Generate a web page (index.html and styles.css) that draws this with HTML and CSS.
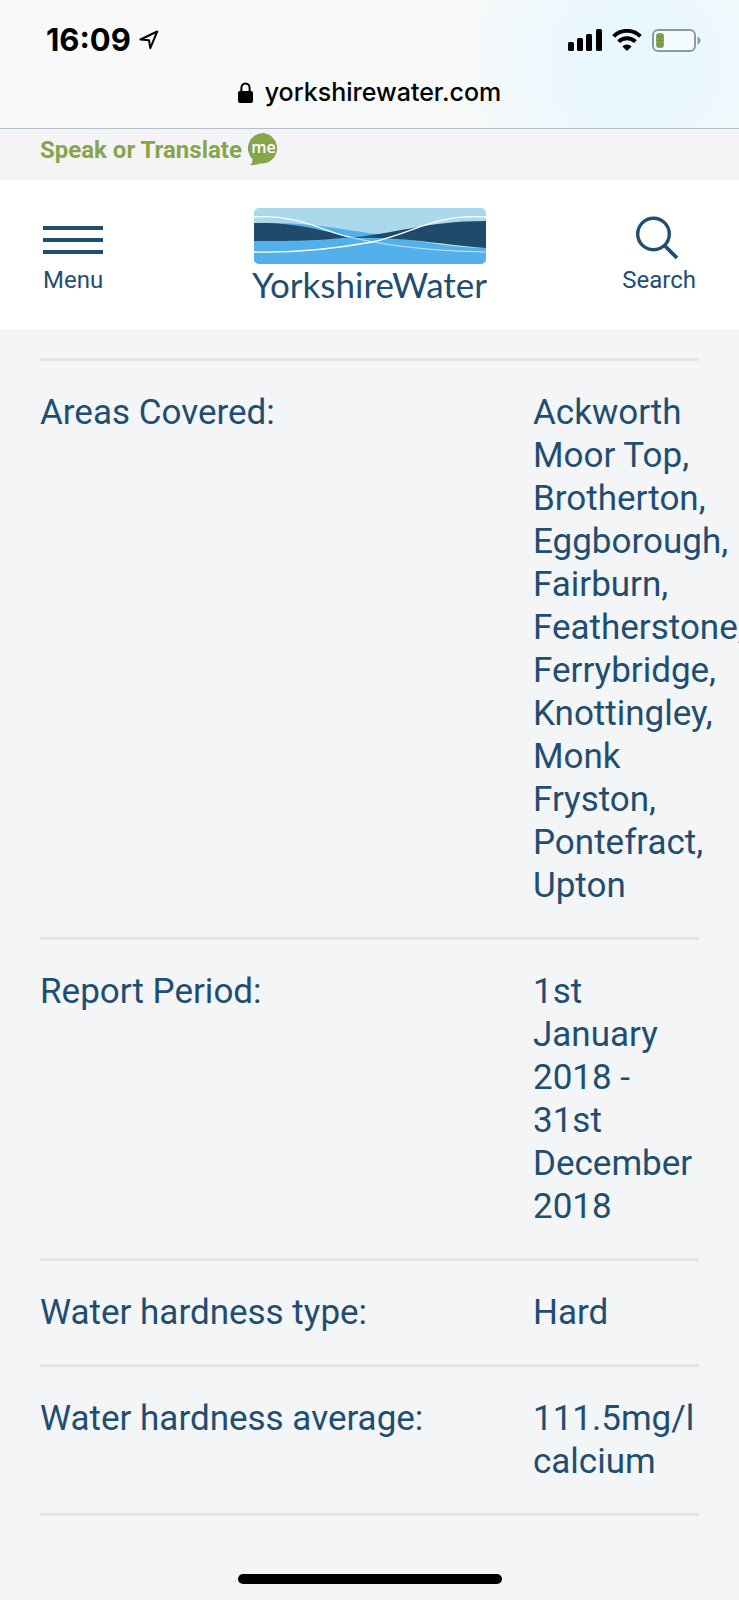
FILE: index.html
```html
<!DOCTYPE html>
<html lang="en">
<head>
    <meta charset="UTF-8">
    <meta name="viewport" content="width=device-width, initial-scale=1.0">
    <title>Yorkshire Water</title>
    <link rel="stylesheet" href="styles.css">
</head>
<body>
    <div class="browser-bar">
        <div class="status">
            <div class="status-time">
                <time>16:09</time>
                <svg width="20" height="20" viewBox="0 0 20 20" aria-hidden="true">
                    <path d="M1.5 9.5 L18.2 1.5 L11.3 18.2 L10 10.2 Z" fill="none" stroke="#000" stroke-width="2" stroke-linejoin="round"/>
                </svg>
            </div>
            <div class="status-icons">
                <svg width="34" height="22" viewBox="0 0 34 22" aria-hidden="true">
                    <rect x="0" y="13" width="6" height="9" rx="1.5"/>
                    <rect x="9" y="9" width="6" height="13" rx="1.5"/>
                    <rect x="18" y="5" width="6" height="17" rx="1.5"/>
                    <rect x="28" y="0" width="6" height="22" rx="1.5"/>
                </svg>
                <svg width="30" height="22" viewBox="0 0 30 22" aria-hidden="true">
                    <g fill="none" stroke="#000" stroke-width="4">
                        <path d="M1.6 7.4 A19 19 0 0 1 28.4 7.4"/>
                        <path d="M6.6 12.6 A12 12 0 0 1 23.4 12.6"/>
                    </g>
                    <path d="M15 22 L10.4 17.4 A6.5 6.5 0 0 1 19.6 17.4 Z"/>
                </svg>
                <svg width="49" height="23" viewBox="0 0 49 23" aria-hidden="true">
                    <rect x="1" y="1" width="42" height="21" rx="5" fill="#f4fbfe" stroke="#8a9ba6" stroke-width="2"/>
                    <path d="M45.5 7.5 C49.5 9 49.5 14 45.5 15.5 Z" fill="#8a9ba6"/>
                    <rect x="4" y="4" width="8" height="15" rx="3" fill="#87a94d"/>
                    <g fill="#4d6a3c">
                        <circle cx="6.5" cy="7" r=".7"/><circle cx="9.5" cy="7" r=".7"/>
                        <circle cx="8" cy="9.2" r=".7"/>
                        <circle cx="6.5" cy="11.4" r=".7"/><circle cx="9.5" cy="11.4" r=".7"/>
                        <circle cx="8" cy="13.6" r=".7"/>
                        <circle cx="6.5" cy="15.8" r=".7"/><circle cx="9.5" cy="15.8" r=".7"/>
                    </g>
                </svg>
            </div>
        </div>
        <div class="address">
            <svg width="15" height="21" viewBox="0 0 15 21" aria-hidden="true">
                <path d="M3.4 10 V6 A4.1 4.6 0 0 1 11.6 6 V10" fill="none" stroke="#000" stroke-width="2"/>
                <rect x="0" y="9" width="15" height="12" rx="2"/>
            </svg>
            <span>yorkshirewater.com</span>
        </div>
    </div>

    <a class="translate" href="#">
        Speak or Translate
        <span class="bubble">
            <svg width="31" height="33" viewBox="0 0 31 33" aria-hidden="true">
                <path d="M15.5 0 A15.3 15.3 0 1 1 12 30.4 Q7 32.6 2 32 Q5 29.5 4.6 26.3 A15.3 15.3 0 0 1 15.5 0 Z" fill="#87a54d"/>
            </svg>
            <span class="bubble-text">me</span>
        </span>
    </a>

    <header class="header">
        <button class="action" type="button">
            <svg width="60" height="44" viewBox="0 0 60 44" aria-hidden="true">
                <path d="M0 12 H60 M0 24 H60 M0 36 H60" stroke="#1f4e71" stroke-width="4"/>
            </svg>
            Menu
        </button>
        <a class="logo" href="#">
            <svg width="232" height="56" viewBox="0 0 232 56" aria-hidden="true">
                <defs>
                    <clipPath id="logoShape"><rect width="232" height="56" rx="5"/></clipPath>
                </defs>
                <g clip-path="url(#logoShape)">
                    <rect width="232" height="56" fill="#abd8ea"/>
                    <path d="M0 15 C60 14 84 21 122 26 C152 30 190 40 232 40 V56 H0 Z" fill="#52b0ea"/>
                    <path d="M0 15 C40 14 66 22 96 29 C70 33 30 33 0 33 Z" fill="#1f4a6a"/>
                    <path d="M90 30 C140 27 170 13 232 13 V40 C190 37 150 28 90 30 Z" fill="#1f4a6a"/>
                    <g fill="none">
                        <path d="M0 9 C45 6 70 24 96 29" stroke="#fff" stroke-width="1.3"/>
                        <path d="M96 29 C140 40 185 43 232 44" stroke="#c5e5f6" stroke-width="1.2"/>
                        <path d="M0 44 C45 45 85 40 118 34 C160 25 180 6 232 9" stroke="#fff" stroke-width="1.3"/>
                    </g>
                </g>
            </svg>
            <span class="logo-name">YorkshireWater</span>
        </a>
        <button class="action" type="button">
            <svg width="50" height="44" viewBox="0 0 50 44" aria-hidden="true">
                <circle cx="19.5" cy="18" r="15.8" fill="none" stroke="#1f4e71" stroke-width="3.4"/>
                <path d="M30.5 29.5 L43 42" stroke="#1f4e71" stroke-width="3.8"/>
            </svg>
            Search
        </button>
    </header>

    <main class="report">
        <table class="report-table">
            <tr>
                <th scope="row">Areas Covered:</th>
                <td>Ackworth Moor Top, Brotherton, Eggborough, Fairburn, Featherstone, Ferrybridge, Knottingley, Monk Fryston, Pontefract, Upton</td>
            </tr>
            <tr>
                <th scope="row">Report Period:</th>
                <td>1st January 2018 - 31st December 2018</td>
            </tr>
            <tr>
                <th scope="row">Water hardness type:</th>
                <td>Hard</td>
            </tr>
            <tr>
                <th scope="row">Water hardness average:</th>
                <td>111.5mg/l calcium</td>
            </tr>
        </table>
    </main>

    <div class="home-bar"></div>
</body>
</html>
```
FILE: styles.css
```css
* {
    margin: 0;
    padding: 0;
    box-sizing: border-box;
}

body {
    min-height: 100vh;
    display: flex;
    flex-direction: column;
    overflow-x: hidden;
    background: #f4f5f7;
    color: #1f4e71;
    font-family: Roboto, sans-serif;
    font-size: 24px;
    line-height: 28px;
}

svg {
    display: block;
    flex-shrink: 0;
}

/* phone status and address bar */
.browser-bar {
    padding: 24px 38px 20px 46px;
    border-bottom: 1px solid #b3c0c8;
    background: radial-gradient(circle at 86% 50%, #e8f7fe 0, #eaf7fe 60px, #f8f9f9 180px);
    color: #000;
    font-family: Inter, sans-serif;
}

.status,
.status-time,
.status-icons,
.address {
    display: flex;
    align-items: center;
}

.status {
    justify-content: space-between;
    height: 32px;
}

.status-time {
    gap: 8px;
    font-size: 31px;
    font-weight: 700;
}

.status-icons {
    gap: 10px;
}

.address {
    justify-content: center;
    gap: 12px;
    margin: 20px 8px 0 0;
    height: 32px;
    font-size: 25px;
    font-weight: 500;
}

.translate {
    display: flex;
    align-items: center;
    gap: 6px;
    height: 51px;
    padding: 0 40px 10px;
    background: #f4f4f7;
    color: #87a54d;
    font-weight: 700;
    text-decoration: none;
}

.bubble {
    position: relative;
}

.bubble-text {
    position: absolute;
    inset: 0;
    color: #fff;
    font-family: "Open Sans", sans-serif;
    font-size: 16px;
    font-weight: 600;
    text-align: center;
}

.header {
    display: grid;
    grid-template-columns: 1fr auto 1fr;
    align-items: center;
    padding: 28px 43px;
    background: #fff;
}

.action {
    display: flex;
    flex-direction: column;
    align-items: center;
    gap: 6px;
    justify-self: start;
    border: none;
    background: transparent;
    color: inherit;
    font: inherit;
    cursor: pointer;
}

.action:last-child {
    justify-self: end;
}

.logo {
    display: flex;
    flex-direction: column;
    align-items: center;
    gap: 2px;
    color: inherit;
    text-decoration: none;
}

.logo-name {
    font-family: Lato, sans-serif;
    font-size: 35px;
    line-height: 36px;
}

.report {
    padding: 28px 40px 0;
}

.report-table {
    width: 100%;
    table-layout: fixed;
    border-collapse: collapse;
    border-top: 3px solid #e3e4e6;
    font-size: 35px;
    line-height: 43px;
}

.report-table tr {
    border-bottom: 3px solid #e3e4e6;
}

.report-table th,
.report-table td {
    padding: 30px 0;
    font-weight: 400;
    text-align: left;
    vertical-align: top;
}

.report-table td {
    width: 166px;
}

.home-bar {
    width: 264px;
    height: 10px;
    margin: auto auto 16px;
    border-radius: 5px;
    background: #000;
}
```
